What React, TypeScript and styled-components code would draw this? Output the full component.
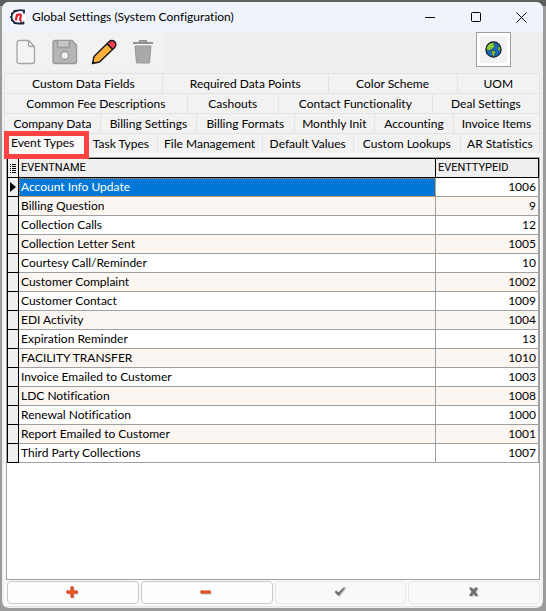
import React, { useState } from "react";
import styled, { createGlobalStyle, css } from "styled-components";

const GlobalStyle = createGlobalStyle`
  * { box-sizing: border-box; }
  body { margin: 0; background: #9b9b9b; font-family: Lato, "Noto Sans", sans-serif; font-size: 12px; font-variant-ligatures: none; color: #000; }
  button { font: inherit; font-variant-ligatures: none; color: inherit; margin: 0; padding: 0; border: 0; background: none; }
`;

const Desktop = styled.div`
  min-height: 100vh;
  display: flex;
  padding: 2px 3px 3px 2px;
  background: linear-gradient(#5e5e5e, #5e5e5e) top / 100% 6px no-repeat, #9b9b9b;
`;

const Window = styled.main`
  flex: 1;
  min-width: 0;
  display: flex;
  flex-direction: column;
  overflow: hidden;
  border-radius: 7px;
  background: #efefef;
`;

const TitleBar = styled.header`
  height: 30px;
  flex: none;
  display: flex;
  align-items: center;
  padding-left: 8px;
  background: #eff3fa;
`;

const Title = styled.h1`
  flex: 1;
  margin: 0 0 0 6px;
  font-size: 12px;
  font-weight: 400;
  line-height: 18px;
  white-space: nowrap;
`;

const CaptionButton = styled.button`
  width: 46px;
  height: 30px;
  display: grid;
  place-items: center;
  &:last-child { width: 44px; }
`;

const Toolbar = styled.div`
  height: 41px;
  flex: none;
  display: flex;
  justify-content: space-between;
  align-items: flex-start;
  padding: 0 32px 0 4px;
`;

const ToolGroup = styled.div`
  display: flex;
  height: 39px;
  width: 157px;
  background: #f2f2f2;
`;

const ToolButton = styled.button`
  width: 39px;
  height: 39px;
  display: grid;
  place-items: center;
`;

const GlobeButton = styled.button`
  width: 35px;
  height: 35px;
  display: grid;
  place-items: center;
  border: 1px solid #a0a0a0;
  background: #f2f2f2;
  box-shadow: inset 0 0 0 3px #fff;
`;

const TabRows = styled.div`
  padding: 0 3px 0 2px;
`;

const TabRow = styled.div`
  display: flex;
  height: 20px;
`;

const Tab = styled.button<{ $grow: number; $active?: boolean }>`
  flex: ${(p) => p.$grow} 1 0;
  min-width: 0;
  height: 20px;
  line-height: 18px;
  white-space: nowrap;
  text-align: center;
  background: #f2f2f2;
  border-top: 1px solid #e3e3e3;
  border-left: 1px solid #e3e3e3;
  &:last-child { border-right: 1px solid #e3e3e3; }
  ${(p) =>
    p.$active &&
    css`
      position: relative;
      overflow: visible;
      padding: 0 4px 2px 0;
      background: #f9f9f9;
      &::after {
        content: "";
        position: absolute;
        inset: -3px -5px -6px -1px;
        border: 5px solid #ff4343;
      }
    `}
`;

const Page = styled.section`
  flex: 1;
  display: flex;
  flex-direction: column;
  margin: 0 2px 1px;
  padding: 4px 1px 2px 2px;
  background: #f9f9f9;
  border-bottom: 1px solid #e3e3e3;
`;

const GridFrame = styled.div`
  flex: 1;
  border: 1px solid #a0a0a0;
  background: #fff;
`;

const Grid = styled.table`
  width: 100%;
  table-layout: fixed;
  border-collapse: separate;
  border-spacing: 0;
  line-height: 18px;
  col.mark { width: 12px; }
  col.id { width: 103px; }
`;

const HeadCell = styled.th`
  height: 20px;
  padding: 0 2px;
  text-align: left;
  font-family: Roboto, "Noto Sans", sans-serif;
  font-size: 11px;
  font-weight: 400;
  background: #efefef;
  border: solid #000;
  border-width: 1px 1px 1px 0;
  &:first-child { border-left-width: 1px; }
`;

const MarkCell = styled.td`
  height: 19px;
  padding: 0;
  background: #efefef;
  border: solid #000;
  border-width: 0 1px 1px 1px;
  svg { display: block; margin: 0 auto; }
`;

const Cell = styled.td<{ $striped?: boolean; $selected?: boolean; $numeric?: boolean }>`
  height: 19px;
  padding: 0 2px;
  white-space: nowrap;
  text-align: ${(p) => (p.$numeric ? "right" : "left")};
  color: ${(p) => (p.$selected ? "#fff" : "#000")};
  background: ${(p) => (p.$selected ? "#0078d7" : p.$striped ? "#fcf6f3" : "#fff")};
  border: solid #a0a0a0;
  border-width: 0 1px 1px 0;
  ${(p) => p.$selected && "outline: 1px dotted #f28a2e; outline-offset: -1px;"}
`;

const Navigator = styled.div`
  display: grid;
  grid-template-columns: repeat(4, 1fr);
  gap: 2px;
  padding: 1px 0 0 1px;
`;

const NavButton = styled.button`
  height: 23px;
  display: grid;
  place-items: center;
  border: 1px solid #c9c9c9;
  border-radius: 4px;
  background: #fdfdfd;
  &:disabled { border-color: #e7e7e7; background: #f9f9f9; }
`;

const tabRows: [string, number][][] = [
  [["Custom Data Fields", 158], ["Required Data Points", 166], ["Color Scheme", 129], ["UOM", 82]],
  [["Common Fee Descriptions", 183], ["Cashouts", 91], ["Contact Functionality", 154], ["Deal Settings", 107]],
  [["Company Data", 96], ["Billing Settings", 96], ["Billing Formats", 98], ["Monthly Init", 80], ["Accounting", 79], ["Invoice Items", 86]],
  [["Event Types", 76], ["Task Types", 72], ["File Management", 105], ["Default Values", 91], ["Custom Lookups", 107], ["AR Statistics", 79]],
];

const events: [string, number][] = [
  ["Account Info Update", 1006],
  ["Billing Question", 9],
  ["Collection Calls", 12],
  ["Collection Letter Sent", 1005],
  ["Courtesy Call/Reminder", 10],
  ["Customer Complaint", 1002],
  ["Customer Contact", 1009],
  ["EDI Activity", 1004],
  ["Expiration Reminder", 13],
  ["FACILITY TRANSFER", 1010],
  ["Invoice Emailed to Customer", 1003],
  ["LDC Notification", 1008],
  ["Renewal Notification", 1000],
  ["Report Emailed to Customer", 1001],
  ["Third Party Collections", 1007],
];

const AppLogo = () => (
  <svg width="16" height="16" viewBox="0 0 16 16" aria-hidden="true">
    <rect width="16" height="16" fill="#fff" />
    <path d="M14 4.500V1.500h-1.500A7 7 0 0 0 8 1.500a6.500 6.500 0 0 0 0 13h5.500v-2" fill="none" stroke="#1b2340" strokeWidth="1.800" />
    <path d="M1 4.500h2M0 8h2M1 11.500h2M4 1l1 2M4 15l1-2M11 15v-2.500" fill="none" stroke="#1b2340" strokeWidth="1.600" />
    <path d="M5.800 11.500 7.100 5M6.800 7.200C8.300 5 11.400 4.600 10.800 7.300l-.7 3c-.2 1 .6 1 1.500.6" fill="none" stroke="#e5202e" strokeWidth="2.200" />
  </svg>
);

const FileIcon = () => (
  <svg width="20" height="26" viewBox="0 0 20 26" aria-hidden="true">
    <path d="M3 1.500h9.500l6 6V22.500a2 2 0 0 1-2 2H3a2 2 0 0 1-2-2v-19a2 2 0 0 1 2-2zM12.500 1.500v4a2 2 0 0 0 2 2h4" fill="#f4f4f4" stroke="#a3a3a3" strokeWidth="1.300" />
  </svg>
);

const SaveIcon = () => (
  <svg width="26" height="26" viewBox="0 0 26 26" aria-hidden="true">
    <path d="M3 1.500h17l4.500 4.500v16.500a2 2 0 0 1-2 2H3a2 2 0 0 1-2-2v-19a2 2 0 0 1 2-2z" fill="#b5b7b7" stroke="#999" strokeWidth="1.400" />
    <path d="M5.500 2v6.500h12V2" fill="#c4c5c5" stroke="#999" strokeWidth="1.400" />
    <circle cx="12.700" cy="16.500" r="4" fill="#f0f0f0" stroke="#999" strokeWidth="1.500" />
  </svg>
);

const PencilIcon = () => (
  <svg width="26" height="26" viewBox="0 0 26 26" aria-hidden="true">
    <path d="M1.500 24.500 3 17.500 18 2.700a4 4 0 0 1 5.700 5.700L8.500 23z" fill="#fbb03b" />
    <path d="m16 4.700 2-2a4 4 0 0 1 5.700 5.700l-2 2z" fill="#ee4056" />
    <path d="M1.500 24.500 3 17.500 18 2.700a4 4 0 0 1 5.700 5.700L8.500 23zM16 4.700l5.700 5.700" fill="none" stroke="#171717" strokeWidth="1.400" strokeLinejoin="round" />
    <path d="m1.300 24.700.6-3 2.200 2.300z" fill="#171717" />
  </svg>
);

const TrashIcon = () => (
  <svg width="22" height="26" viewBox="0 0 22 26" aria-hidden="true">
    <path d="M1 4h20M7 4l1-2.200h6L15 4" fill="none" stroke="#929292" strokeWidth="1.800" />
    <path d="M3 7h16l-1.500 17h-13z" fill="#a9a9a9" stroke="#979797" />
  </svg>
);

const GlobeIcon = () => (
  <svg width="17" height="17" viewBox="0 0 17 17" aria-hidden="true">
    <circle cx="8.500" cy="8.500" r="7.600" fill="#1769bb" />
    <path d="M1.300 8.500C1 4 5 1 9.500 1.300L8.500 4 10 5.500 6.500 8.500 4 9.500zM6.500 9.500l4.500.8-1.500 2.700-.5 2.800-1.800-1.500zM13 5.500l2.300.5.7 2.500-1.500 1.500-1.500-1.500z" fill="#8fcb35" stroke="#22333b" strokeWidth=".5" />
    <circle cx="8.500" cy="8.500" r="7.600" fill="none" stroke="#19202b" strokeWidth="1.200" />
  </svg>
);

const glyphs = {
  insert: "M4 0h3v4h4v3H7v4H4V7H0V4h4z",
  remove: "M0 4h10v3H0z",
  post: "M0 5.500 1.800 4l2 2L9 1h2L4 9.500z",
  cancel: "M1 1h2.500l1.500 2 1.500-2H9v1.500L7 5.300 9 8v1.500H6.500L5 7.300l-1.500 2.200H1V8l2-2.700-2-2.800z",
};

const NavGlyph = ({ kind, active }: { kind: keyof typeof glyphs; active?: boolean }) => (
  <svg width="13" height="13" viewBox="0 0 13 13" aria-hidden="true">
    <path d={glyphs[kind]} transform="translate(1.500 1.500)" fill="#c9c9c9" />
    <path d={glyphs[kind]} transform="translate(.5 .5)" fill={active ? "#cf2b00" : "#6f6f6f"} />
    {active && (
      <path d={kind === "insert" ? "M6 2v8M2 6h8" : "M1.500 6h8"} stroke="#ff7a2b" fill="none" />
    )}
  </svg>
);

export default function App() {
  const [activeTab, setActiveTab] = useState("Event Types");
  const [selected, setSelected] = useState(0);

  return (
    <>
      <GlobalStyle />
      <Desktop>
        <Window>
          <TitleBar>
            <AppLogo />
            <Title>Global Settings (System Configuration)</Title>
            <CaptionButton aria-label="Minimize">
              <svg width="11" height="11"><path d="M0 5.500h10" stroke="#000" /></svg>
            </CaptionButton>
            <CaptionButton aria-label="Maximize">
              <svg width="11" height="11"><rect x=".5" y=".5" width="9" height="9" rx="1" fill="none" stroke="#000" /></svg>
            </CaptionButton>
            <CaptionButton aria-label="Close">
              <svg width="11" height="11"><path d="m.5.500 10 10m0-10-10 10" stroke="#000" /></svg>
            </CaptionButton>
          </TitleBar>
          <Toolbar>
            <ToolGroup>
              <ToolButton aria-label="New" disabled><FileIcon /></ToolButton>
              <ToolButton aria-label="Save" disabled><SaveIcon /></ToolButton>
              <ToolButton aria-label="Edit"><PencilIcon /></ToolButton>
              <ToolButton aria-label="Delete" disabled><TrashIcon /></ToolButton>
            </ToolGroup>
            <GlobeButton aria-label="Web"><GlobeIcon /></GlobeButton>
          </Toolbar>
          <TabRows role="tablist">
            {tabRows.map((row) => (
              <TabRow key={row[0][0]} role="presentation">
                {row.map(([label, grow]) => (
                  <Tab
                    key={label}
                    role="tab"
                    aria-selected={label === activeTab}
                    $grow={grow}
                    $active={label === activeTab}
                    onClick={() => setActiveTab(label)}
                  >
                    {label}
                  </Tab>
                ))}
              </TabRow>
            ))}
          </TabRows>
          <Page role="tabpanel" aria-label={activeTab}>
            <GridFrame>
              <Grid>
                <colgroup>
                  <col className="mark" />
                  <col />
                  <col className="id" />
                </colgroup>
                <thead>
                  <tr>
                    <HeadCell as="td">
                      <svg width="8" height="10" viewBox="0 0 8 10" aria-hidden="true" display="block">
                        <path d="M0 1.500h1M0 3.500h1M0 5.500h1M0 7.500h1M0 9.500h1M2 1.500h4M2 3.500h4M2 5.500h4M2 7.500h4M2 9.500h4" stroke="#000" />
                      </svg>
                    </HeadCell>
                    <HeadCell scope="col">EVENTNAME</HeadCell>
                    <HeadCell scope="col">EVENTTYPEID</HeadCell>
                  </tr>
                </thead>
                <tbody>
                  {events.map(([name, id], i) => (
                    <tr key={id} onClick={() => setSelected(i)}>
                      <MarkCell>
                        {i === selected && (
                          <svg width="6" height="10" viewBox="0 0 6 10" aria-hidden="true"><path d="M0 0v10l6-5z" /></svg>
                        )}
                      </MarkCell>
                      <Cell $striped={i % 2 === 1} $selected={i === selected}>{name}</Cell>
                      <Cell $striped={i % 2 === 1} $numeric>{id}</Cell>
                    </tr>
                  ))}
                </tbody>
              </Grid>
            </GridFrame>
            <Navigator>
              <NavButton aria-label="Insert record"><NavGlyph kind="insert" active /></NavButton>
              <NavButton aria-label="Delete record"><NavGlyph kind="remove" active /></NavButton>
              <NavButton aria-label="Post edit" disabled><NavGlyph kind="post" /></NavButton>
              <NavButton aria-label="Cancel edit" disabled><NavGlyph kind="cancel" /></NavButton>
            </Navigator>
          </Page>
        </Window>
      </Desktop>
    </>
  );
}
